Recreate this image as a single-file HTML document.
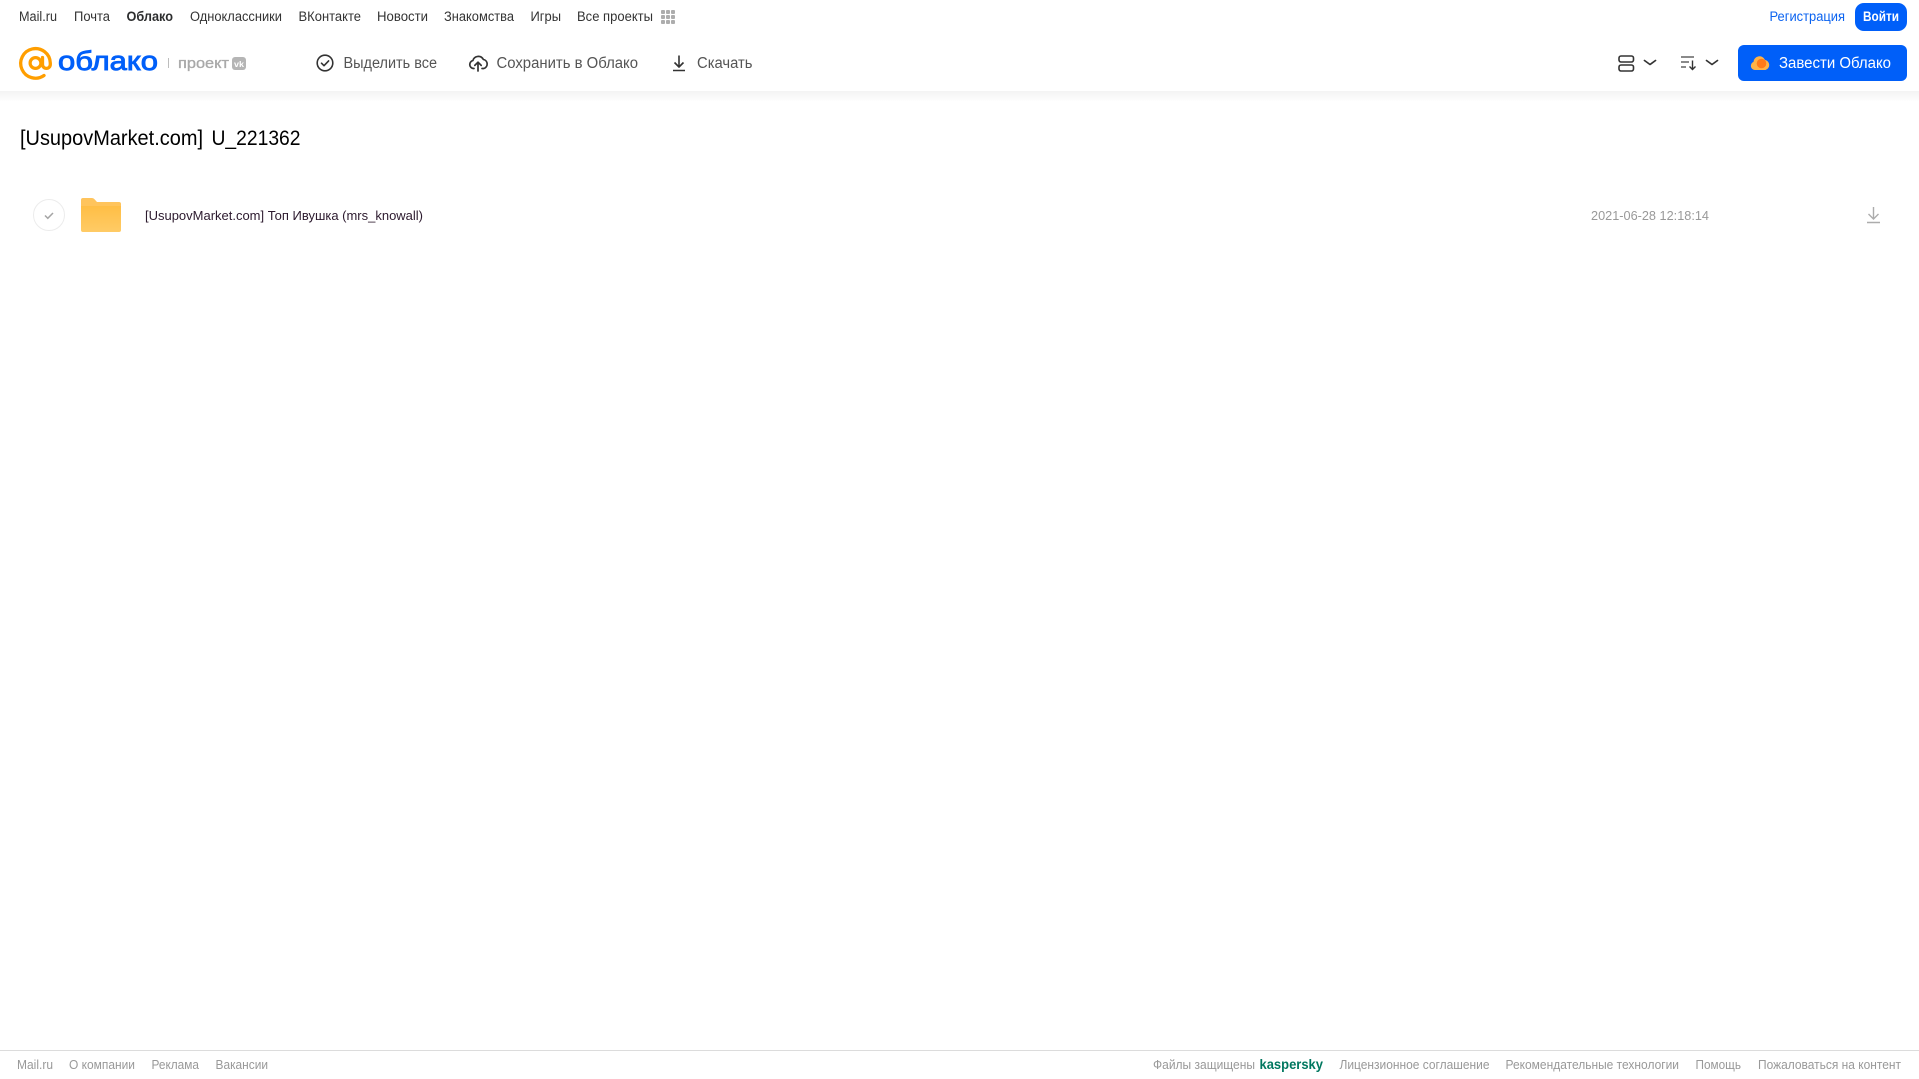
<!DOCTYPE html>
<html lang="ru"><head><meta charset="utf-8"><title>[UsupovMarket.com] U_221362</title>
<style>
html,body{margin:0;padding:0;background:#fff;width:1919px;height:1079px;overflow:hidden}
svg{display:block;position:absolute;left:0;top:0}
text{font-family:"Liberation Sans",sans-serif}
.n{font-size:13.5px;fill:#333}
.a{font-size:15.5px;fill:#555}
.f{font-size:12.5px;fill:#999}
</style></head><body>
<svg width="1919" height="1079" viewBox="0 0 1919 1079" xmlns="http://www.w3.org/2000/svg">
<defs>
<linearGradient id="sh" x1="0" y1="0" x2="0" y2="1"><stop offset="0" stop-color="#f3f3f3"/><stop offset="1" stop-color="#fff"/></linearGradient>
<linearGradient id="fo" x1="0" y1="0" x2="0" y2="1"><stop offset="0" stop-color="#ffbe45"/><stop offset="1" stop-color="#ffcb66"/></linearGradient>
</defs>
<rect x="0" y="91" width="1919" height="11" fill="url(#sh)"/>

<!-- top nav -->
<text class="n" x="19" y="21" textLength="38" lengthAdjust="spacingAndGlyphs">Mail.ru</text>
<text class="n" x="74" y="21" textLength="36" lengthAdjust="spacingAndGlyphs">Почта</text>
<text class="n" x="126.500" y="21" textLength="46.500" lengthAdjust="spacingAndGlyphs" font-weight="bold" style="fill:#2c2d2e">Облако</text>
<text class="n" x="190" y="21" textLength="92" lengthAdjust="spacingAndGlyphs">Одноклассники</text>
<text class="n" x="298.500" y="21" textLength="62.500" lengthAdjust="spacingAndGlyphs">ВКонтакте</text>
<text class="n" x="377" y="21" textLength="51" lengthAdjust="spacingAndGlyphs">Новости</text>
<text class="n" x="444" y="21" textLength="70" lengthAdjust="spacingAndGlyphs">Знакомства</text>
<text class="n" x="530.500" y="21" textLength="30.500" lengthAdjust="spacingAndGlyphs">Игры</text>
<text class="n" x="577" y="21" textLength="76" lengthAdjust="spacingAndGlyphs">Все проекты</text>
<g fill="#adadad">
<rect x="661" y="10" width="4" height="4" rx="1"/><rect x="666" y="10" width="4" height="4" rx="1"/><rect x="671" y="10" width="4" height="4" rx="1"/>
<rect x="661" y="15" width="4" height="4" rx="1"/><rect x="666" y="15" width="4" height="4" rx="1"/><rect x="671" y="15" width="4" height="4" rx="1"/>
<rect x="661" y="20" width="4" height="4" rx="1"/><rect x="666" y="20" width="4" height="4" rx="1"/><rect x="671" y="20" width="4" height="4" rx="1"/>
</g>

<!-- logo -->
<path d="M44 75.500A14.800 14.800 0 1 1 50.300 63V64.500A3.900 3.900 0 0 1 42.500 64.500V57.500" fill="none" stroke="#ff9e00" stroke-width="3.300" stroke-linecap="round" stroke-linejoin="round"/>
<circle cx="35.500" cy="63" r="5.400" fill="none" stroke="#ff9e00" stroke-width="3.200"/>
<text x="58" y="70" font-size="27" fill="#005ff9" stroke="#005ff9" stroke-width="0.900" textLength="100" lengthAdjust="spacingAndGlyphs">облако</text>
<rect x="168" y="58" width="1" height="10" fill="#bdbdbd"/>
<text x="178" y="68" font-size="15" fill="#a9a9a9" stroke="#a9a9a9" stroke-width="0.350" textLength="51" lengthAdjust="spacingAndGlyphs">проект</text>
<rect x="232" y="57" width="14" height="13" rx="3" fill="#b5b5b5"/>
<text x="234" y="67" font-size="8" font-weight="bold" fill="#fff" textLength="10" lengthAdjust="spacingAndGlyphs">vk</text>

<!-- actions -->
<circle cx="325" cy="63" r="7.800" fill="none" stroke="#333" stroke-width="1.600"/>
<path d="M321.500 63.200l2.500 2.500 4.600-4.800" fill="none" stroke="#333" stroke-width="1.600" stroke-linecap="round" stroke-linejoin="round"/>
<text class="a" x="343.500" y="68" textLength="93.500" lengthAdjust="spacingAndGlyphs">Выделить все</text>

<path d="M474 68.500h-.5a4 4 0 0 1-.6-7.900 5.600 5.600 0 0 1 10.400-1.200 4.700 4.700 0 0 1 .6 9.100H482" fill="none" stroke="#333" stroke-width="1.700" stroke-linecap="round" stroke-linejoin="round"/>
<path d="M478 71V62.500M474.800 65.400l3.200-3.200 3.200 3.200" fill="none" stroke="#333" stroke-width="1.700" stroke-linecap="round" stroke-linejoin="round"/>
<text class="a" x="496.500" y="68" textLength="141.500" lengthAdjust="spacingAndGlyphs">Сохранить в Облако</text>

<path d="M679 55.500V67M674.500 62.500l4.500 4.500 4.500-4.500M673 70.500h12" fill="none" stroke="#333" stroke-width="1.600" stroke-linejoin="round"/>
<text class="a" x="697" y="68" textLength="55.500" lengthAdjust="spacingAndGlyphs">Скачать</text>

<!-- right top -->
<text x="1769.500" y="21" font-size="13.500" fill="#0b63f0" textLength="75.500" lengthAdjust="spacingAndGlyphs">Регистрация</text>
<rect x="1855" y="3" width="52" height="28" rx="9" fill="#005ff9"/>
<text x="1863" y="21" font-size="13.500" font-weight="bold" fill="#fff" textLength="36" lengthAdjust="spacingAndGlyphs">Войти</text>

<rect x="1619" y="56" width="14.500" height="6" rx="2" fill="none" stroke="#333" stroke-width="1.600"/>
<rect x="1619" y="65" width="14.500" height="6" rx="2" fill="none" stroke="#333" stroke-width="1.600"/>
<path d="M1644.500 60.500l5.500 4 5.500-4" fill="none" stroke="#333" stroke-width="1.700" stroke-linecap="round" stroke-linejoin="round"/>
<path d="M1681 57h13M1681 62h8M1681 67h5" fill="none" stroke="#444" stroke-width="1.200"/>
<path d="M1692.500 60.500v9M1689.500 66.500l3 3 3-3" fill="none" stroke="#333" stroke-width="1.400"/>
<path d="M1706.500 60.500l5.500 4 5.500-4" fill="none" stroke="#333" stroke-width="1.700" stroke-linecap="round" stroke-linejoin="round"/>

<rect x="1738" y="45" width="169" height="36" rx="6" fill="#005ff9"/>
<path d="M1755 70a4.200 4.200 0 0 1-1.500-8.100 6 6 0 0 1 11.500-2 5.200 5.200 0 0 1 .5 10.100z" fill="#ffb347"/>
<circle cx="1761.500" cy="63.500" r="4.800" fill="#ff7a1a"/>
<text x="1779" y="68" font-size="15.500" fill="#fff" textLength="112" lengthAdjust="spacingAndGlyphs">Завести Облако</text>

<!-- title -->
<text x="20" y="145" font-size="21" fill="#000" textLength="183" lengthAdjust="spacingAndGlyphs">[UsupovMarket.com]</text>
<text x="211.500" y="145" font-size="21" fill="#000" textLength="89" lengthAdjust="spacingAndGlyphs">U_221362</text>

<!-- row -->
<circle cx="49" cy="215" r="15.500" fill="#fff" stroke="#ececec" stroke-width="1"/>
<path d="M45 215.500l2.800 2.800 5.200-5.300" fill="none" stroke="#a5a5a5" stroke-width="1.500"/>
<path d="M81 200a2 2 0 0 1 2-2h9a3 3 0 0 1 2.500 1.300L97 202h22a2 2 0 0 1 2 2v3H81z" fill="#ffc45c"/>
<path d="M81 206h40v24a2 2 0 0 1-2 2H83a2 2 0 0 1-2-2z" fill="url(#fo)"/>
<text x="145" y="220" font-size="12.500" fill="#2c1a2e" textLength="278" lengthAdjust="spacingAndGlyphs">[UsupovMarket.com] Топ Ивушка (mrs_knowall)</text>
<text x="1591" y="220" font-size="12.500" fill="#999" textLength="118" lengthAdjust="spacingAndGlyphs">2021-06-28 12:18:14</text>
<path d="M1873.500 207v12M1868.500 214l5 5 5-5M1867 222.500h13" fill="none" stroke="#acacac" stroke-width="1.400"/>

<!-- footer -->
<rect x="0" y="1050" width="1919" height="1" fill="#dcdcdc"/>
<text class="f" x="17" y="1069" textLength="36" lengthAdjust="spacingAndGlyphs">Mail.ru</text>
<text class="f" x="69" y="1069" textLength="66" lengthAdjust="spacingAndGlyphs">О компании</text>
<text class="f" x="151.500" y="1069" textLength="47.500" lengthAdjust="spacingAndGlyphs">Реклама</text>
<text class="f" x="215.500" y="1069" textLength="52.500" lengthAdjust="spacingAndGlyphs">Вакансии</text>
<text class="f" x="1153" y="1069" textLength="102" lengthAdjust="spacingAndGlyphs">Файлы защищены</text>
<text x="1259.500" y="1069" font-size="13.500" font-weight="bold" fill="#00775f" textLength="63.500" lengthAdjust="spacingAndGlyphs">kaspersky</text>
<text class="f" x="1339.500" y="1069" textLength="150" lengthAdjust="spacingAndGlyphs">Лицензионное соглашение</text>
<text class="f" x="1505.500" y="1069" textLength="173.500" lengthAdjust="spacingAndGlyphs">Рекомендательные технологии</text>
<text class="f" x="1695.500" y="1069" textLength="45.500" lengthAdjust="spacingAndGlyphs">Помощь</text>
<text class="f" x="1758" y="1069" textLength="143" lengthAdjust="spacingAndGlyphs">Пожаловаться на контент</text>
</svg>
</body></html>
